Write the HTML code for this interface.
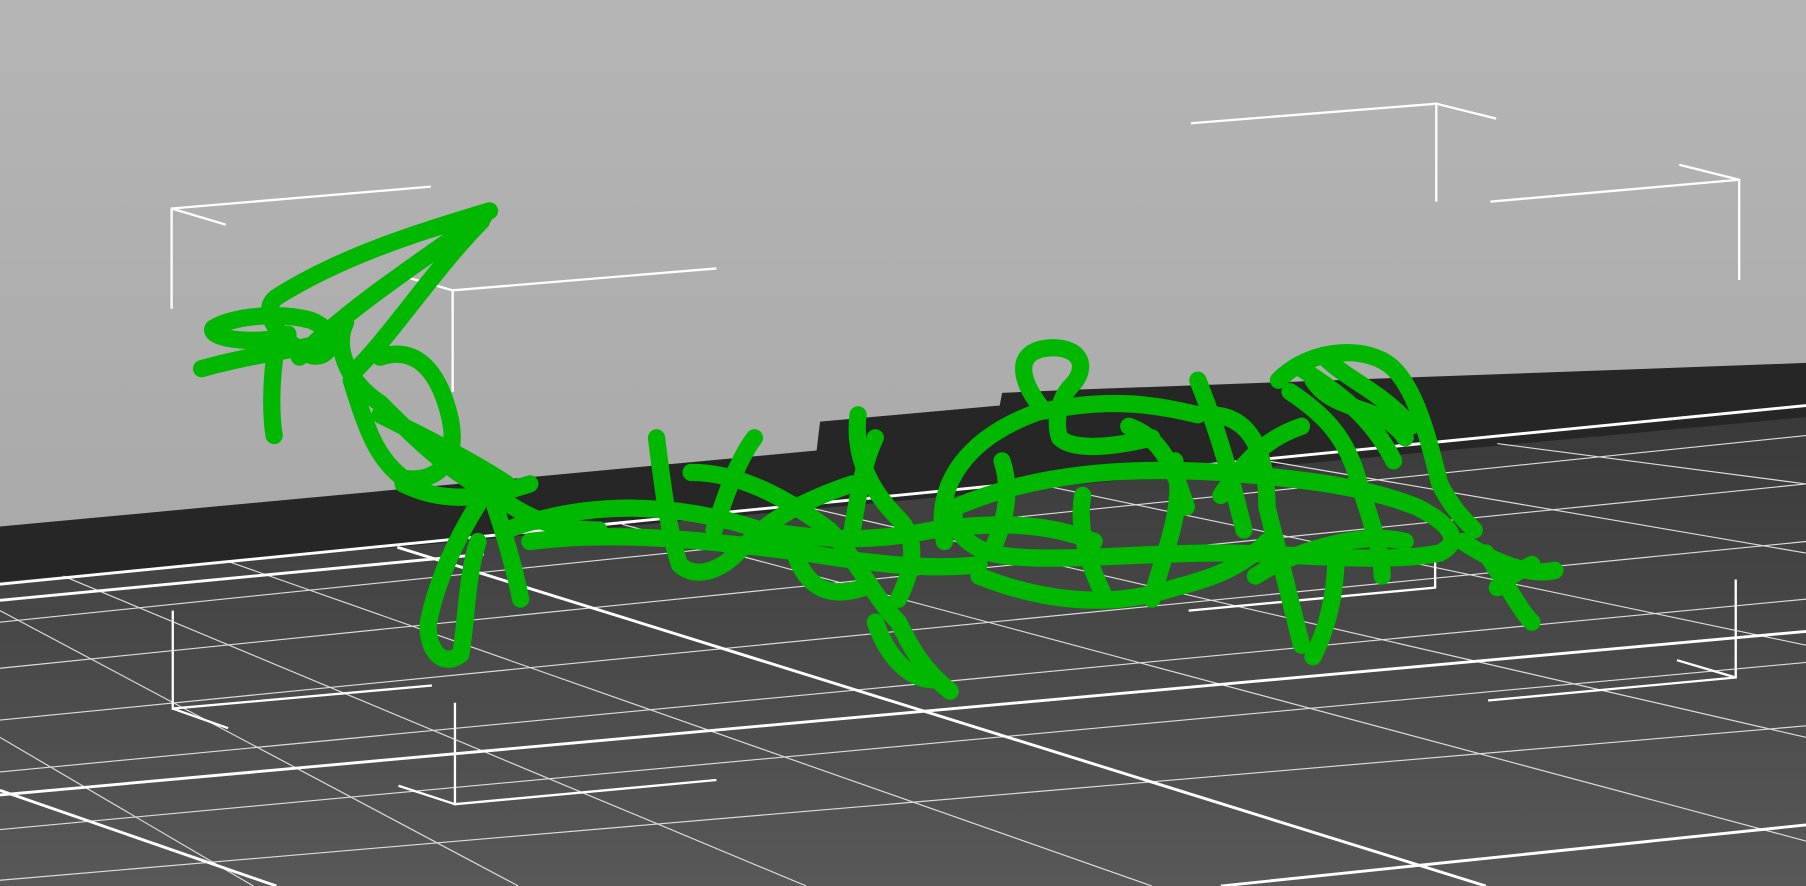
<!DOCTYPE html>
<html><head><meta charset="utf-8"><style>
html,body{margin:0;padding:0;width:1806px;height:886px;overflow:hidden;background:#aaa}
svg{display:block}
</style></head><body>
<svg width="1806" height="886" viewBox="0 0 1568 769" preserveAspectRatio="none" xmlns="http://www.w3.org/2000/svg">
<defs>
<linearGradient id="bg" x1="0" y1="0" x2="0" y2="1"><stop offset="0" stop-color="#b5b5b5"/><stop offset="1" stop-color="#a2a2a2"/></linearGradient>
<linearGradient id="fl" x1="0" y1="0" x2="0" y2="1"><stop offset="0" stop-color="#3a3a3a"/><stop offset="1" stop-color="#585858"/></linearGradient>
</defs>
<rect width="1568" height="769" fill="url(#bg)"/>
<polygon points="0,457 709,391 712,366 868,352 870,341 940,338 1568,315 1568,400 0,520" fill="#262626"/>
<polygon points="0,505 400,470 1568,362 1568,769 0,769" fill="url(#fl)"/>
<g stroke="#ddd" stroke-width="1" fill="none">
<line x1="0" y1="540" x2="1568" y2="378"/><line x1="0" y1="580" x2="1568" y2="420"/>
<line x1="0" y1="625" x2="1568" y2="470"/><line x1="0" y1="670" x2="1568" y2="520"/>
<line x1="0" y1="720" x2="1568" y2="575"/><line x1="0" y1="764" x2="1568" y2="630"/>
<line x1="55" y1="500" x2="700" y2="769"/><line x1="200" y1="488" x2="1000" y2="769"/>
<line x1="0" y1="530" x2="450" y2="769"/><line x1="0" y1="640" x2="220" y2="769"/>
<line x1="540" y1="455" x2="1568" y2="730"/><line x1="700" y1="440" x2="1568" y2="640"/>
<line x1="900" y1="420" x2="1568" y2="560"/><line x1="1100" y1="400" x2="1568" y2="480"/>
<line x1="1300" y1="385" x2="1568" y2="420"/>
</g>
<g stroke="#fff" stroke-width="2.5" fill="none">
<line x1="0" y1="507" x2="1568" y2="352"/><line x1="0" y1="521" x2="420" y2="481"/>
<line x1="345" y1="475" x2="1290" y2="769"/>
<line x1="0" y1="690" x2="1568" y2="548"/>
<line x1="0" y1="686" x2="240" y2="769"/>
<line x1="1060" y1="769" x2="1568" y2="716"/>
</g>
<g stroke="#fff" stroke-width="2" fill="none">
<polyline points="374,162 149,181 149,268"/><line x1="149" y1="181" x2="196" y2="195"/>
<polyline points="622,233 393,252 393,340"/><line x1="393" y1="252" x2="344" y2="238"/>
<polyline points="1034,107 1247,90 1247,175"/><line x1="1247" y1="90" x2="1299" y2="103"/>
<polyline points="1294,175 1510,156 1510,243"/><line x1="1510" y1="156" x2="1458" y2="143"/>
<polyline points="150,530 150,615 375,595"/><line x1="150" y1="615" x2="198" y2="632"/>
<polyline points="395,610 395,698 622,677"/><line x1="395" y1="698" x2="346" y2="682"/>
<polyline points="1246,488 1246,510 1032,530"/>
<polyline points="1507,503 1507,588 1292,608"/><line x1="1507" y1="588" x2="1456" y2="573"/>
</g>
<g stroke="#00b800" stroke-width="15" fill="none" stroke-linecap="round" stroke-linejoin="round">
<path d="M425,183 C370,200 300,220 240,258 C225,270 240,290 262,305 C285,320 300,290 270,278 C240,270 200,275 185,285 C180,295 230,300 250,290"/>
<path d="M420,188 C360,230 300,270 260,310 M418,192 C380,230 340,290 310,320"/>
<path d="M175,320 C210,310 245,305 270,300 M240,300 C235,330 235,360 238,378"/>
<path d="M300,280 C290,300 300,330 330,350 C360,380 390,410 430,430 C460,450 480,460 520,460"/>
<path d="M305,330 C320,380 330,400 350,415 C380,420 400,400 390,360 C380,320 360,300 330,310"/>
<path d="M330,360 C370,380 410,400 440,420 M350,420 C390,440 430,430 460,420"/>
<path d="M420,430 C400,460 380,500 372,540 C370,565 385,580 400,568 C405,540 405,500 415,470"/>
<path d="M430,440 C440,470 448,500 452,520"/>
<path d="M440,460 C520,430 600,440 660,460 C720,470 760,470 810,460 C850,455 900,450 950,470"/>
<path d="M460,470 C540,460 620,470 700,480 C760,490 810,495 850,490"/>
<path d="M570,380 C575,420 580,460 590,490 C600,500 620,500 640,480 C660,460 680,440 740,420 M655,380 C640,400 630,430 620,460"/>
<path d="M745,360 C740,400 760,430 780,450 C800,470 790,500 780,520 M760,380 C750,400 745,430 740,460"/>
<path d="M600,410 C640,410 680,430 720,460 C740,480 760,520 780,540 C790,560 800,580 825,600"/>
<path d="M690,480 C700,510 720,520 750,510 M760,540 C770,570 790,590 810,590"/>
<path d="M820,470 C810,420 840,380 900,358 C960,345 1000,350 1040,360"/>
<path d="M905,355 C885,330 880,305 910,302 C940,300 945,320 930,335 C920,345 915,365 920,380 C930,390 960,390 1000,380"/>
<path d="M830,440 C900,410 980,405 1060,410 C1120,415 1180,420 1230,440 C1260,455 1270,470 1250,480 C1200,490 1120,480 1060,480 C980,480 900,490 860,480 C830,470 825,450 830,440"/>
<path d="M850,500 C900,520 960,530 1020,510 C1060,500 1080,490 1100,470"/>
<path d="M940,430 C935,460 945,490 960,520 M1020,400 C1030,440 1010,480 1000,520"/>
<path d="M1040,330 C1060,380 1070,420 1080,460 M1050,360 C1090,360 1100,400 1100,440 C1110,480 1120,520 1130,560"/>
<path d="M1110,330 C1140,300 1190,300 1210,320 C1230,340 1240,380 1250,420 C1260,440 1270,450 1280,460"/>
<path d="M1120,340 C1150,360 1170,380 1180,420 C1190,450 1200,480 1200,500 M1140,330 C1160,360 1200,350 1220,380"/>
<path d="M1090,500 C1120,480 1180,460 1220,470 M1160,480 C1160,520 1150,550 1140,570"/>
<path d="M1270,470 C1300,490 1330,500 1350,495 M1290,480 C1310,510 1320,530 1330,540 M1300,510 C1310,500 1320,495 1330,490"/>
<path d="M1060,430 C1080,400 1100,380 1130,370 M980,370 C1010,380 1020,410 1030,440"/>
<path d="M870,400 C880,430 870,460 860,480"/>
<path d="M1130,320 C1160,340 1190,360 1210,400 M1150,310 C1170,330 1200,340 1225,370"/>
</g>
</svg>
</body></html>
